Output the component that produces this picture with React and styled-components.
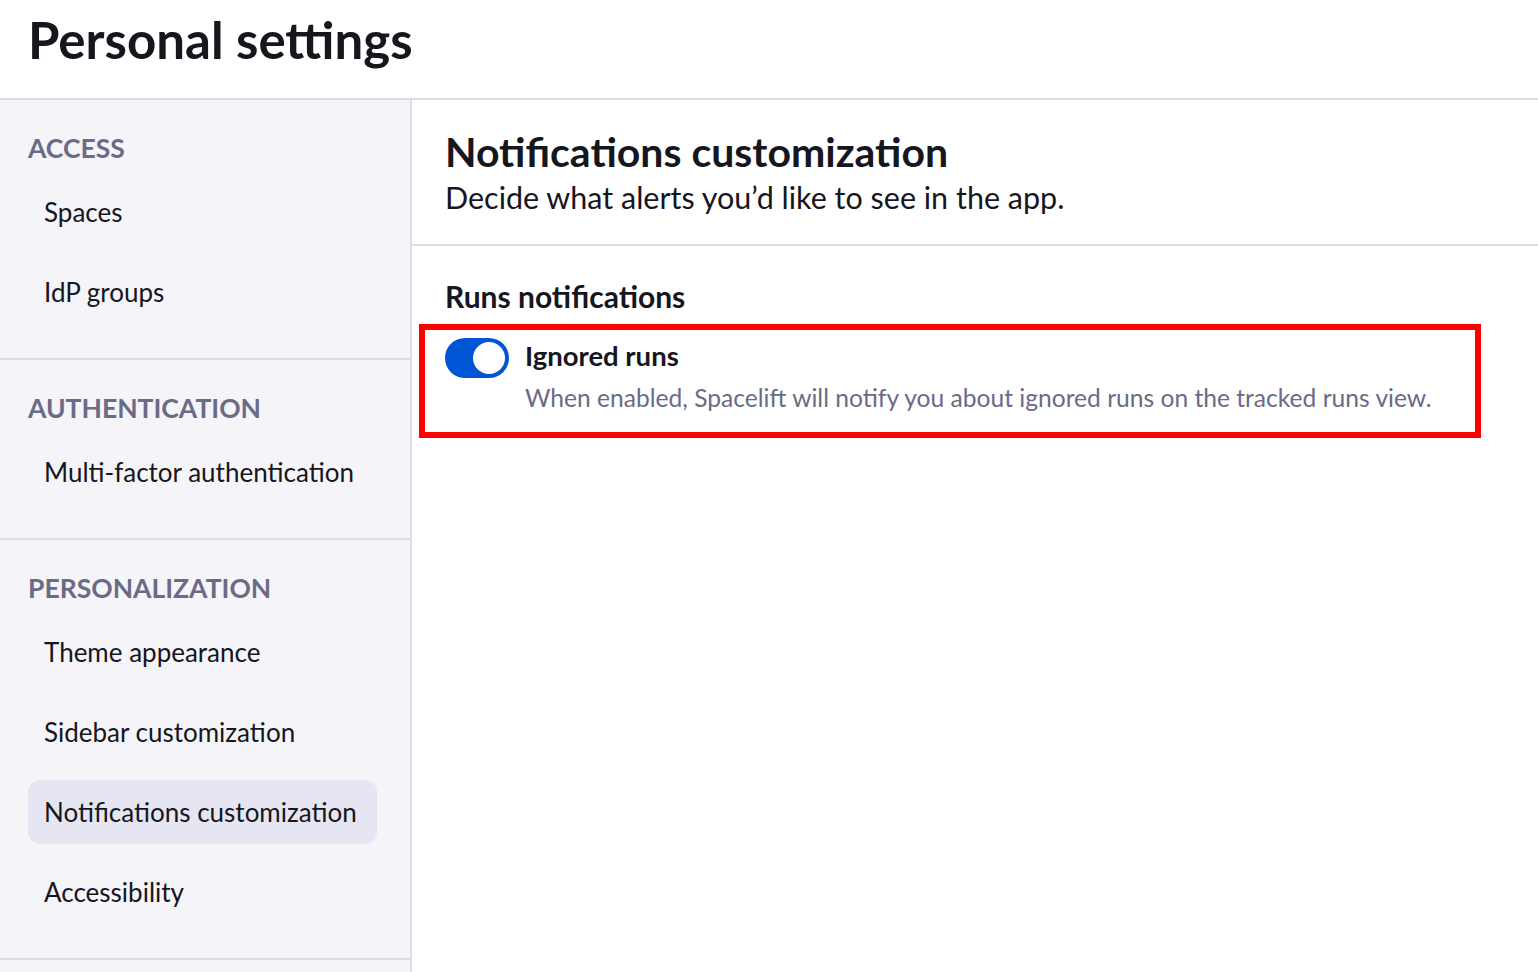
import React from 'react';
import styled, { createGlobalStyle } from 'styled-components';

const GlobalStyle = createGlobalStyle`
  * { box-sizing: border-box; }
  html, body { margin: 0; padding: 0; background: #ffffff; }
  body {
    font-family: Lato, "Noto Sans", sans-serif;
    color: #16161d;
  }
`;

const Page = styled.div`
  display: flex;
  flex-direction: column;
  height: 972px;
  overflow: hidden;
`;

const TopBar = styled.header`
  height: 100px;
  padding: 9px 28px 0;
  border-bottom: 2px solid #dcdbe9;
  display: flex;
  align-items: flex-start;
`;

const PageTitle = styled.h1`
  margin: 0;
  font-size: 51px;
  line-height: 62px;
  font-weight: 700;
  color: #16161d;
`;

const Body = styled.div`
  flex: 1;
  display: flex;
  min-height: 0;
`;

const Sidebar = styled.nav`
  width: 412px;
  flex-shrink: 0;
  background: #f4f4f9;
  border-right: 2px solid #dcdbe9;
`;

const Section = styled.div`
  padding: 32px 33px 34px 28px;
  border-bottom: 2px solid #dcdbe9;
  display: flex;
  flex-direction: column;
  gap: 16px;
`;

const SectionTitle = styled.div`
  font-size: 26.5px;
  line-height: 32px;
  font-weight: 700;
  color: #6b6b85;
  text-transform: uppercase;
`;

const NavItem = styled.a`
  display: flex;
  align-items: center;
  height: 64px;
  padding: 0 16px;
  border-radius: 12px;
  font-size: 26px;
  color: #16161d;
  text-decoration: none;
  background: ${(p) => (p.$active ? '#e6e6f2' : 'transparent')};
  cursor: pointer;
`;

const Main = styled.main`
  flex: 1;
  display: flex;
  flex-direction: column;
`;

const MainHeader = styled.div`
  padding: 28px 33px 28px;
  border-bottom: 2px solid #dcdbe9;
`;

const MainTitle = styled.h2`
  margin: 0;
  font-size: 41px;
  line-height: 47px;
  font-weight: 700;
`;

const MainSubtitle = styled.p`
  margin: 4px 0 0;
  font-size: 30.5px;
  line-height: 37px;
`;

const Content = styled.div`
  padding: 34px 33px;
`;

const GroupTitle = styled.h3`
  margin: 0 0 26px;
  font-size: 30px;
  line-height: 32px;
  font-weight: 700;
`;

const Row = styled.div`
  position: relative;
  display: flex;
  gap: 16px;
  align-items: flex-start;
  max-width: 1035px;

  &::after {
    content: '';
    position: absolute;
    left: -26px;
    top: -14px;
    right: -1px;
    bottom: -24px;
    border: 6px solid #ff0000;
    pointer-events: none;
  }
`;

const Toggle = styled.button`
  width: 64px;
  height: 40px;
  border: none;
  padding: 4px;
  border-radius: 20px;
  background: ${(p) => (p.$on ? '#0055d4' : '#c4c4d4')};
  display: flex;
  justify-content: ${(p) => (p.$on ? 'flex-end' : 'flex-start')};
  align-items: center;
  flex-shrink: 0;
  cursor: pointer;
`;

const Knob = styled.span`
  width: 32px;
  height: 32px;
  border-radius: 50%;
  background: #ffffff;
`;

const RowText = styled.div`
  display: flex;
  flex-direction: column;
  gap: 8px;
`;

const RowLabel = styled.div`
  font-size: 27.5px;
  line-height: 36px;
  font-weight: 700;
`;

const RowHint = styled.div`
  font-size: 24.6px;
  line-height: 32px;
  color: #6b6b85;
`;

const sections = [
  { title: 'Access', items: ['Spaces', 'IdP groups'] },
  { title: 'Authentication', items: ['Multi-factor authentication'] },
  {
    title: 'Personalization',
    items: [
      'Theme appearance',
      'Sidebar customization',
      'Notifications customization',
      'Accessibility',
    ],
  },
];

export default function App() {
  return (
    <>
      <GlobalStyle />
      <Page>
        <TopBar>
          <PageTitle>Personal settings</PageTitle>
        </TopBar>
        <Body>
          <Sidebar>
            {sections.map((s) => (
              <Section key={s.title}>
                <SectionTitle>{s.title}</SectionTitle>
                {s.items.map((item) => (
                  <NavItem key={item} $active={item === 'Notifications customization'}>
                    {item}
                  </NavItem>
                ))}
              </Section>
            ))}
          </Sidebar>
          <Main>
            <MainHeader>
              <MainTitle>Notifications customization</MainTitle>
              <MainSubtitle>Decide what alerts you’d like to see in the app.</MainSubtitle>
            </MainHeader>
            <Content>
              <GroupTitle>Runs notifications</GroupTitle>
              <Row>
                <Toggle $on aria-label="Ignored runs">
                  <Knob />
                </Toggle>
                <RowText>
                  <RowLabel>Ignored runs</RowLabel>
                  <RowHint>
                    When enabled, Spacelift will notify you about ignored runs on the tracked runs view.
                  </RowHint>
                </RowText>
              </Row>
            </Content>
          </Main>
        </Body>
      </Page>
    </>
  );
}
